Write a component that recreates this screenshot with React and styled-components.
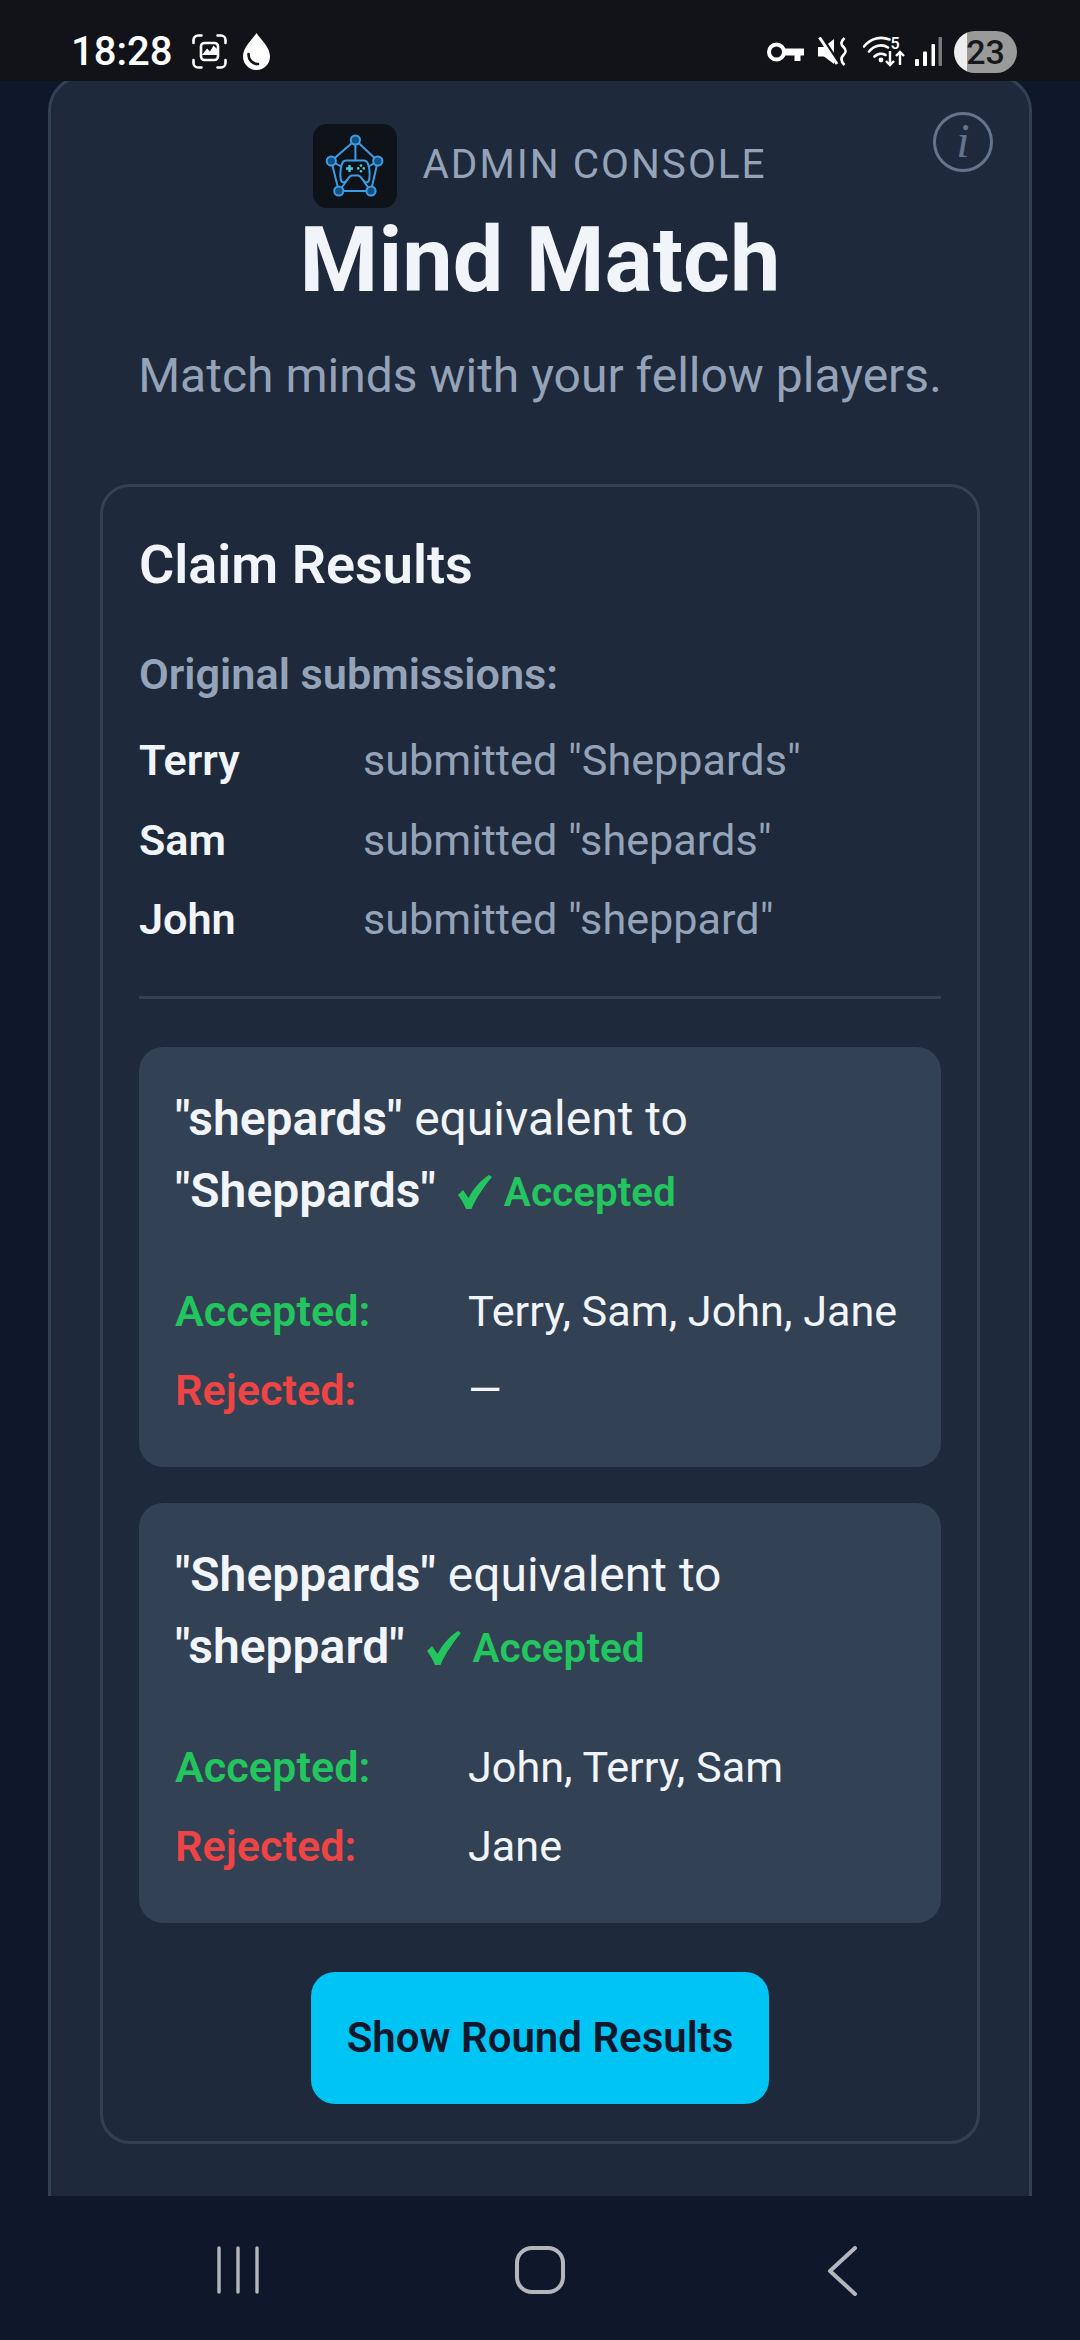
import React from "react";
import styled, { createGlobalStyle } from "styled-components";

const GlobalStyle = createGlobalStyle`
  html, body {
    margin: 0;
    padding: 0;
    background: #0f172a;
  }
  body {
    font-family: Roboto, "Liberation Sans", sans-serif;
  }
`;

const Screen = styled.div`
  width: 1080px;
  height: 2340px;
  display: flex;
  flex-direction: column;
  overflow: hidden;
  background: #0f172a;
`;

const StatusBar = styled.div`
  flex: 0 0 81px;
  box-sizing: border-box;
  padding: 22px 63px 0 71px;
  display: flex;
  align-items: center;
  justify-content: space-between;
  background: #111318;
  position: relative;
  z-index: 1;
`;

const StatusGroup = styled.div`
  display: flex;
  align-items: center;
`;

const Clock = styled.span`
  font-size: 40px;
  font-weight: 500;
  color: #fff;
  margin-right: 20px;
  line-height: 1;
`;

const StatusIcon = styled.svg`
  display: block;
  flex: none;
  margin-left: ${(p) => p.$gap || 0}px;
`;

const Battery = styled.div`
  width: 63px;
  height: 42px;
  margin-left: 12px;
  border-radius: 21px;
  overflow: hidden;
  background: linear-gradient(to right, #eeeeee 0 13px, #9a9a9a 13px);
  color: #17181c;
  font-size: 34px;
  font-weight: 500;
  line-height: 42px;
  text-align: center;
`;

const Viewport = styled.div`
  flex: 1;
  min-height: 0;
  overflow: hidden;
  padding: 0 48px;
`;

const Panel = styled.main`
  position: relative;
  margin-top: -6px;
  box-sizing: border-box;
  height: 2200px;
  padding: 46px 49px 0;
  background: #1e293b;
  border: 3px solid #334155;
  border-radius: 36px;
`;

const InfoButton = styled.div`
  position: absolute;
  top: 34px;
  right: 36px;
  width: 60px;
  height: 60px;
  box-sizing: border-box;
  border: 3px solid #64748b;
  border-radius: 50%;
  color: #64748b;
  font-family: "Liberation Serif", serif;
  font-style: italic;
  font-size: 48px;
  line-height: 52px;
  text-align: center;
`;

const Brand = styled.div`
  display: flex;
  align-items: center;
  justify-content: center;
  gap: 25px;
`;

const LogoTile = styled.div`
  width: 84px;
  height: 84px;
  border-radius: 14px;
  background: #0e1319;
`;

const BrandLabel = styled.span`
  font-size: 40.5px;
  letter-spacing: 2px;
  padding-bottom: 4px;
  color: #94a3b8;
`;

const Title = styled.h1`
  margin: 5px 0 0;
  font-size: 90px;
  line-height: 96px;
  font-weight: 700;
  text-align: center;
  color: #f1f5f9;
`;

const Subtitle = styled.p`
  margin: 37px 0 0;
  font-size: 48px;
  line-height: 60px;
  text-align: center;
  color: #94a3b8;
`;

const ResultsCard = styled.section`
  margin-top: 78px;
  height: 1660px;
  box-sizing: border-box;
  padding: 42px 36px 0;
  border: 3px solid #334155;
  border-radius: 30px;
`;

const CardTitle = styled.h2`
  margin: 0;
  font-size: 54px;
  line-height: 72px;
  font-weight: 600;
  color: #f1f5f9;
`;

const SectionLabel = styled.div`
  margin-top: 44px;
  font-size: 43.2px;
  line-height: 60px;
  font-weight: 600;
  color: #94a3b8;
`;

const SubmissionList = styled.div`
  margin-top: 16px;
  display: grid;
  grid-template-columns: 224px 1fr;
  grid-auto-rows: 79.5px;
  align-items: center;
  font-size: 43.2px;
`;

const PlayerName = styled.span`
  font-weight: 600;
  color: #f1f5f9;
`;

const SubmittedWord = styled.span`
  color: #94a3b8;
`;

const Divider = styled.hr`
  margin: 36px 0 48px;
  border: 0;
  height: 3px;
  background: #334155;
`;

const ClaimCard = styled.article`
  box-sizing: border-box;
  height: 420px;
  padding: 36px 36px 0;
  margin-bottom: 36px;
  border-radius: 24px;
  background: #334155;
`;

const ClaimText = styled.div`
  font-size: 48px;
  line-height: 72px;
  color: #f1f5f9;

  strong {
    font-weight: 600;
  }
`;

const Verdict = styled.span`
  display: inline-flex;
  align-items: center;
  gap: 12px;
  margin-left: 22px;
  vertical-align: -2px;
  font-size: 40.5px;
  font-weight: 600;
  color: #22c55e;
`;

const Tick = styled.svg`
  display: block;
  flex: none;
`;

const VoteGrid = styled.div`
  margin-top: 44px;
  display: grid;
  grid-template-columns: 293px 1fr;
  grid-auto-rows: 79px;
  align-items: center;
  font-size: 43.2px;
  color: #f1f5f9;
`;

const VoteLabel = styled.span`
  font-weight: 600;
  color: ${(p) => (p.$kind === "rejected" ? "#ef4444" : "#22c55e")};
`;

const ButtonRow = styled.div`
  display: flex;
  justify-content: center;
  margin-top: 49px;
`;

const PrimaryButton = styled.button`
  width: 458px;
  height: 132px;
  border: 0;
  border-radius: 24px;
  background: #00c4f4;
  color: #0f172a;
  font-family: inherit;
  font-size: 42px;
  font-weight: 600;
`;

const NavBar = styled.nav`
  flex: 0 0 144px;
  box-sizing: border-box;
  padding-top: 50px;
  position: relative;
  z-index: 1;
  background: #0f172a;
  display: grid;
  grid-template-columns: repeat(3, 302px);
  justify-content: center;
  justify-items: center;
  align-items: start;
`;

const NavIcon = styled.svg`
  display: block;
`;

const Logo = () => (
  <svg width="84" height="84" viewBox="0 0 84 84" fill="none" style={{ display: "block" }}>
    <g stroke="#3d9ce6" strokeWidth="2">
      <path d="M42.4 16 L18.3 37 M42.4 16 L64.8 37 M42.4 16 V36 M18.3 37 L25.8 67 M64.8 37 L58 67 M25.8 67 H58" />
      <path d="M18.3 37 L29 43 M64.8 37 L55 43 M25.8 67 L33 58 M58 67 L51 58" />
      <path d="M33 36.5 H51 C54 36.5 55.5 39 56.3 45 C57.2 53 56.5 58.5 53.5 58.5 C50 58.5 49 52.5 45.5 51.5 H38.5 C35 52.5 34 58.5 30.5 58.5 C27.5 58.5 26.8 53 27.7 45 C28.5 39 30 36.5 33 36.5 Z" />
    </g>
    <g stroke="#3d9ce6" strokeWidth="2" fill="#14507f">
      <circle cx="42.4" cy="16" r="4.6" />
      <circle cx="18.3" cy="37" r="4.6" />
      <circle cx="64.8" cy="37" r="4.6" />
      <circle cx="25.8" cy="67" r="4.6" />
      <circle cx="58" cy="67" r="4.6" />
    </g>
    <path d="M36.5 41 V48 M33 44.5 H40" stroke="#4fc6dc" strokeWidth="2.4" />
    <g fill="#4fc6dc">
      <circle cx="48" cy="41.6" r="1.3" />
      <circle cx="48" cy="47.2" r="1.3" />
      <circle cx="45.2" cy="44.4" r="1.3" />
      <circle cx="50.8" cy="44.4" r="1.3" />
    </g>
  </svg>
);

const CheckMark = () => (
  <Tick width="34" height="34" viewBox="0 0 34 34">
    <path d="M0 20 L5 15 L10.5 23 C15 14 23 5 31 0 L34 2 C26.5 11 18.5 22 13.5 34 H8 C5.5 28 3 24 0 20 Z" fill="currentColor" />
  </Tick>
);

const ScreenshotIcon = () => (
  <StatusIcon width="35" height="35" viewBox="0 0 35 35" fill="none">
    <path d="M1.5 9V6A4.5 4.5 0 0 1 6 1.5H9.5M25.5 1.5H29A4.5 4.5 0 0 1 33.5 6V9M33.5 26V29A4.5 4.5 0 0 1 29 33.5H25.5M9.5 33.5H6A4.5 4.5 0 0 1 1.5 29V26" stroke="#fff" strokeWidth="2.6" strokeLinecap="round" />
    <rect x="9" y="9" width="17" height="17" rx="3.5" stroke="#fff" strokeWidth="2.6" />
    <path d="M10 21 L15 14.5 L18 17.5 L21.5 11.5 L25 15 V21 Z" fill="#fff" />
  </StatusIcon>
);

const DropIcon = () => (
  <StatusIcon $gap={16} width="27" height="37" viewBox="0 0 27 37">
    <path d="M13.5 0 C18 7 27 14 27 23.5 A13.5 13.5 0 0 1 0 23.5 C0 14 9 7 13.5 0 Z" fill="#fff" />
    <path d="M5.5 21 C5.5 27 9.5 31 15 31" stroke="#111318" strokeWidth="2.6" fill="none" strokeLinecap="round" />
  </StatusIcon>
);

const KeyIcon = () => (
  <StatusIcon width="37" height="20" viewBox="0 0 37 20" fill="none">
    <circle cx="9.5" cy="10" r="7.5" stroke="#fff" strokeWidth="4" />
    <path d="M17 6.5 H37 V13.5 H33.5 V19 H27.5 V13.5 H17 Z" fill="#fff" />
  </StatusIcon>
);

const MuteIcon = () => (
  <StatusIcon $gap={14} width="29" height="29" viewBox="0 0 29 29" fill="none">
    <path d="M0 10 H6 L16 2 V27 L6 19.5 H0 Z" fill="#fff" />
    <path d="M4 0.5 L21 26" stroke="#111318" strokeWidth="3" />
    <path d="M1.5 0.5 L19 27" stroke="#fff" strokeWidth="3" />
    <path d="M26.5 1 C22.5 5 22.5 7 25.5 10 C28.5 13 28.5 15 25.5 18 C22.5 21 22.5 24 26.5 28" stroke="#fff" strokeWidth="2.6" />
  </StatusIcon>
);

const WifiIcon = () => (
  <StatusIcon $gap={16} width="42" height="39" viewBox="0 -4 42 39" fill="none">
    <path d="M1 10.5 C8 2 18 0 26.5 3.5 M6 15.5 C11 9.5 19 7.5 25 11.5 M11.5 20.5 C14.5 17.5 19 17 22.5 19" stroke="#fff" strokeWidth="2.6" strokeLinecap="round" />
    <circle cx="18" cy="24" r="2.4" fill="#fff" />
    <path d="M27 15 V29 M23 25 L27 29 L31 25 M37 29 V16 M33 20 L37 16 L41 20" stroke="#fff" strokeWidth="2.4" />
    <text x="27.5" y="12.5" fontSize="16" fontWeight="500" fontFamily="Roboto, sans-serif" fill="#fff">5</text>
  </StatusIcon>
);

const SignalIcon = () => (
  <StatusIcon $gap={10} width="27" height="29" viewBox="0 0 27 29">
    <rect x="0" y="22" width="4" height="7" rx="1" fill="#fff" />
    <rect x="8" y="14.5" width="4" height="14.5" rx="1" fill="#fff" />
    <rect x="16.5" y="7" width="3.5" height="22" rx="1" fill="#fff" />
    <rect x="23.5" y="0" width="3.5" height="29" rx="1" fill="#77797d" />
  </StatusIcon>
);

const Claim = ({ from, to, accepted, rejected }) => (
  <ClaimCard>
    <ClaimText>
      <strong>"{from}"</strong> equivalent to
      <br />
      <strong>"{to}"</strong>
      <Verdict>
        <CheckMark />
        Accepted
      </Verdict>
    </ClaimText>
    <VoteGrid>
      <VoteLabel>Accepted:</VoteLabel>
      <span>{accepted}</span>
      <VoteLabel $kind="rejected">Rejected:</VoteLabel>
      <span>{rejected}</span>
    </VoteGrid>
  </ClaimCard>
);

const App = () => (
  <>
    <GlobalStyle />
    <Screen>
      <StatusBar>
        <StatusGroup>
          <Clock>18:28</Clock>
          <ScreenshotIcon />
          <DropIcon />
        </StatusGroup>
        <StatusGroup>
          <KeyIcon />
          <MuteIcon />
          <WifiIcon />
          <SignalIcon />
          <Battery>23</Battery>
        </StatusGroup>
      </StatusBar>

      <Viewport>
        <Panel>
          <InfoButton>i</InfoButton>
          <Brand>
            <LogoTile>
              <Logo />
            </LogoTile>
            <BrandLabel>ADMIN CONSOLE</BrandLabel>
          </Brand>
          <Title>Mind Match</Title>
          <Subtitle>Match minds with your fellow players.</Subtitle>

          <ResultsCard>
            <CardTitle>Claim Results</CardTitle>
            <SectionLabel>Original submissions:</SectionLabel>
            <SubmissionList>
              <PlayerName>Terry</PlayerName>
              <SubmittedWord>submitted "Sheppards"</SubmittedWord>
              <PlayerName>Sam</PlayerName>
              <SubmittedWord>submitted "shepards"</SubmittedWord>
              <PlayerName>John</PlayerName>
              <SubmittedWord>submitted "sheppard"</SubmittedWord>
            </SubmissionList>
            <Divider />

            <Claim from="shepards" to="Sheppards" accepted="Terry, Sam, John, Jane" rejected="—" />
            <Claim from="Sheppards" to="sheppard" accepted="John, Terry, Sam" rejected="Jane" />

            <ButtonRow>
              <PrimaryButton>Show Round Results</PrimaryButton>
            </ButtonRow>
          </ResultsCard>
        </Panel>
      </Viewport>

      <NavBar>
        <NavIcon width="42" height="48" viewBox="0 0 42 48" fill="none" stroke="#b4b6bb" strokeWidth="3.4" strokeLinecap="round">
          <path d="M2 2 V46 M21 2 V46 M40 2 V46" />
        </NavIcon>
        <NavIcon width="50" height="48" viewBox="0 0 50 48" fill="none" stroke="#b4b6bb" strokeWidth="4">
          <rect x="2" y="2" width="46" height="44" rx="15" />
        </NavIcon>
        <NavIcon width="30" height="50" viewBox="0 0 30 50" fill="none" stroke="#b4b6bb" strokeWidth="4" strokeLinecap="round" strokeLinejoin="round">
          <path d="M28 2 L3 25 L28 48" />
        </NavIcon>
      </NavBar>
    </Screen>
  </>
);

export default App;
